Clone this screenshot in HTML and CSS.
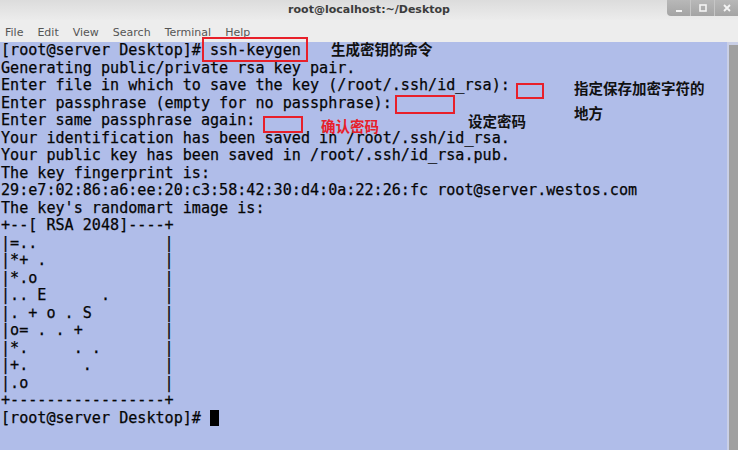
FILE: index.html
```html
<!DOCTYPE html>
<html lang="zh-CN">
<head>
  <meta charset="UTF-8">
  <title>root@localhost:~/Desktop</title>
  <link rel="stylesheet" href="styles.css">
</head>
<body>
  <div class="window">
    <div class="titlebar">
      <span class="title">root@localhost:~/Desktop</span>
      <div class="controls">
        <span class="ctl"><svg width="8" height="8" viewBox="0 0 8 8"><rect x="1" y="6" width="6" height="2" fill="#f4f4f4"/></svg></span>
        <span class="ctl"><svg width="8" height="8" viewBox="0 0 8 8"><rect x="1" y="1" width="6" height="6" fill="none" stroke="#f4f4f4" stroke-width="1.6"/></svg></span>
        <span class="ctl"><svg width="8" height="8" viewBox="0 0 8 8"><path d="M1 1 L7 7 M7 1 L1 7" stroke="#f4f4f4" stroke-width="1.8"/></svg></span>
      </div>
    </div>
    <div class="menubar">
      <span>File</span>
      <span>Edit</span>
      <span>View</span>
      <span>Search</span>
      <span>Terminal</span>
      <span>Help</span>
    </div>
    <div class="body">
<pre class="term">[root@server Desktop]# ssh-keygen
Generating public/private rsa key pair.
Enter file in which to save the key (/root/.ssh/id_rsa): 
Enter passphrase (empty for no passphrase): 
Enter same passphrase again: 
Your identification has been saved in /root/.ssh/id_rsa.
Your public key has been saved in /root/.ssh/id_rsa.pub.
The key fingerprint is:
29:e7:02:86:a6:ee:20:c3:58:42:30:d4:0a:22:26:fc root@server.westos.com
The key's randomart image is:
+--[ RSA 2048]----+
|=..              |
|*+ .             |
|*.o              |
|.. E      .      |
|. + o . S        |
|o= . . +         |
|*.     . .       |
|+.      .        |
|.o               |
+-----------------+
[root@server Desktop]# <span class="cursor"></span></pre>
      <div class="scrollbar"><div class="thumb"></div></div>

      <span class="mark mark-cmd"></span>
      <span class="mark mark-file"></span>
      <span class="mark mark-pass"></span>
      <span class="mark mark-again"></span>

      <span class="note note-cmd">生成密钥的命令</span>
      <span class="note note-file">指定保存加密字符的<br>地方</span>
      <span class="note note-pass">设定密码</span>
      <span class="note note-again">确认密码</span>
    </div>
  </div>
</body>
</html>
```
FILE: styles.css
```css
body {
  margin: 0;
  padding: 0;
  background: #b0bde9;
}
.window {
  width: 738px;
  height: 450px;
  display: flex;
  flex-direction: column;
  overflow: hidden;
}
.titlebar {
  height: 20px;
  background: linear-gradient(to bottom, #dcdcdc, #ececec);
  display: flex;
  justify-content: center;
  align-items: center;
  position: relative;
}
.title {
  font-family: "DejaVu Sans", sans-serif;
  font-size: 11px;
  font-weight: bold;
  color: #3c3c3c;
  margin-top: -2px;
}
.controls {
  position: absolute;
  right: 0;
  top: 0;
  display: flex;
  height: 16px;
  border-bottom-left-radius: 4px;
  overflow: hidden;
  background: linear-gradient(to bottom, #b8b8b8, #a4a4a4);
}
.ctl {
  width: 23px;
  display: flex;
  align-items: center;
  justify-content: center;
  border-left: 1px solid #c6c6c6;
}
.ctl:first-child {
  border-left: none;
}
.menubar {
  height: 22px;
  box-sizing: border-box;
  padding: 3px 0 0 5px;
  background: #ededed;
  display: flex;
  align-items: center;
  gap: 14px;
  font-family: "DejaVu Sans", sans-serif;
  font-size: 11px;
  color: #555;
}
.body {
  flex: 1;
  position: relative;
  display: flex;
  background: #b0bde9;
}
.term {
  flex: 1;
  margin: 0;
  padding: 0 0 0 1px;
  font-family: "DejaVu Sans Mono", monospace;
  font-size: 15.1px;
  line-height: 17.5px;
  color: #050505;
  -webkit-text-stroke: 0.25px #050505;
}
.cursor {
  display: inline-block;
  width: 9px;
  height: 16px;
  background: #000;
  vertical-align: -3px;
}
.scrollbar {
  width: 9px;
  display: flex;
  background: #c9cfe6;
  padding-left: 2px;
}
.thumb {
  flex: 1;
  margin-top: 3px;
  background: #a0a0a0;
}
.mark {
  position: absolute;
  border: 2px solid #e8202a;
  box-sizing: border-box;
}
.mark-cmd {
  left: 202px;
  top: -5px;
  width: 106px;
  height: 25px;
}
.mark-file {
  left: 516px;
  top: 41px;
  width: 28px;
  height: 16px;
}
.mark-pass {
  left: 395px;
  top: 53px;
  width: 60px;
  height: 19px;
}
.mark-again {
  left: 263px;
  top: 74px;
  width: 40px;
  height: 17px;
}
.note {
  position: absolute;
  font-family: "Noto Sans CJK SC", sans-serif;
  font-size: 14.5px;
  font-weight: bold;
  color: #111;
  line-height: 25px;
}
.note-cmd {
  left: 331px;
  top: -6px;
}
.note-file {
  left: 574px;
  top: 33px;
}
.note-pass {
  left: 468px;
  top: 66px;
}
.note-again {
  left: 321px;
  top: 71px;
  color: #e8202a;
}
```
